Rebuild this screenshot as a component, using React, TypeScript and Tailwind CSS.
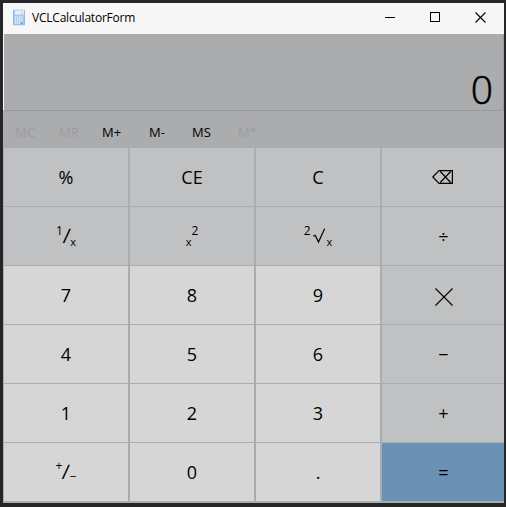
import type { ReactNode } from "react";

function CalculatorIcon() {
  return (
    <svg width="12" height="16" viewBox="0 0 12 16" className="-translate-y-[1.5px]">
      <rect width="12" height="16" rx="1" fill="#8fb8de" />
      <rect x="1" y="1" width="10" height="14" fill="#a3cbf0" />
      <rect x="2" y="1" width="9" height="4" fill="#e9f1f8" />
      <rect x="8" y="3" width="2" height="1" fill="#a9bed2" />
      {[7, 9, 11, 13].map((y) =>
        [2, 4, 6, 8].map((x) => (
          <rect
            key={`${x}-${y}`}
            x={x}
            y={y}
            width="1.3"
            height="1.2"
            fill={x === 8 && y === 13 ? "#3977b5" : "#edf6ff"}
          />
        )),
      )}
    </svg>
  );
}

function Backspace() {
  return (
    <svg width="22" height="14" viewBox="0 0 22 14" fill="none" stroke="#000" strokeWidth="1.2">
      <path d="M7 .6H20.4V13.4H7L.8 7Z M8.3 1.5L18.6 12.5M18.6 1.5L8.3 12.5" />
    </svg>
  );
}

function Times() {
  return (
    <svg width="18" height="18" viewBox="0 0 18 18" stroke="#000" strokeWidth="1.1" className="translate-y-[2px]">
      <path d="M.5 .5L17.5 17.5M17.5 .5L.5 17.5" />
    </svg>
  );
}

function Small({ children, className }: { children: ReactNode; className: string }) {
  return <span className={`leading-none font-medium ${className}`}>{children}</span>;
}

function Slash() {
  return <span className="-skew-x-[5deg] text-[20px] leading-none">/</span>;
}

const Reciprocal = (
  <span className="flex items-center">
    <Small className="-translate-y-[5px] text-[12px]">1</Small>
    <Slash />
    <Small className="translate-y-[5px] text-[11px]">x</Small>
  </span>
);
const Square = (
  <span className="flex items-center">
    <Small className="translate-y-[5px] text-[11px]">x</Small>
    <Small className="-translate-y-[5px] text-[12px]">2</Small>
  </span>
);
const Root = (
  <span className="flex items-center">
    <Small className="-translate-y-[5px] text-[12px]">2</Small>
    <svg width="16" height="16" viewBox="0 0 16 16" fill="none" stroke="#000">
      <path d="M2.3 8.3L4.2 7.3L7.5 14L13.6 .8" strokeWidth="1.2" />
    </svg>
    <Small className="translate-y-[5px] text-[11px]">x</Small>
  </span>
);
const Sign = (
  <span className="flex items-center">
    <Small className="-translate-y-[6px] text-[12px]">+</Small>
    <Slash />
    <Small className="translate-y-[5px] text-[12px]">−</Small>
  </span>
);

type Key = { label: ReactNode; tone: string };
const fn = "bg-[#c0c1c2]";
const op = "bg-[#c0c1c2] pl-px";
const num = "bg-[#d6d6d6]";

const keys: Key[] = [
  { label: "%", tone: fn },
  { label: "CE", tone: fn },
  { label: "C", tone: fn },
  { label: <Backspace />, tone: fn },
  { label: Reciprocal, tone: fn },
  { label: Square, tone: fn },
  { label: Root, tone: fn },
  { label: "÷", tone: op },
  { label: "7", tone: num },
  { label: "8", tone: num },
  { label: "9", tone: num },
  { label: <Times />, tone: op },
  { label: "4", tone: num },
  { label: "5", tone: num },
  { label: "6", tone: num },
  { label: "−", tone: op },
  { label: "1", tone: num },
  { label: "2", tone: num },
  { label: "3", tone: num },
  { label: "+", tone: op },
  { label: Sign, tone: num },
  { label: "0", tone: num },
  { label: ".", tone: num },
  { label: "=", tone: "bg-[#6b91b5] pl-px" },
];

const memory = [
  { label: "MC", width: "w-[44px]", on: false },
  { label: "MR", width: "w-[43px]", on: false },
  { label: "M+", width: "w-[47px]", on: true },
  { label: "M-", width: "w-[43px]", on: true },
  { label: "MS", width: "w-[46px]", on: true },
  { label: "M*", width: "w-[40px]", on: false },
];

export default function App() {
  return (
    <div className="h-[507px] w-[506px] bg-[#262527] pt-[3px] pl-[3px] font-['Open_Sans','Noto_Sans',sans-serif] text-black">
      <div className="flex h-[500px] w-[501px] flex-col bg-[#abacae]">
        <header className="flex h-[31px] shrink-0 items-center bg-[#f7f7f7] pl-[10px]">
          <CalculatorIcon />
          <h1 className="ml-[7px] -translate-y-[1px] text-[12px] tracking-[-0.22px]">VCLCalculatorForm</h1>
          <div className="mr-[18px] ml-auto flex items-center gap-[35px] pb-[3px]">
            <svg width="10" height="11" shapeRendering="crispEdges">
              <rect y="5" width="10" height="1" />
            </svg>
            <svg width="10" height="10" fill="none" stroke="#000">
              <rect x=".5" y=".5" width="9" height="9" />
            </svg>
            <svg width="11" height="11" stroke="#000" strokeWidth="1.1">
              <path d="M.5 .5L10.5 10.5M10.5 .5L.5 10.5" />
            </svg>
          </div>
        </header>
        <div className="flex h-[77px] shrink-0 items-end justify-end border-r border-b border-l border-r-[#98999b] border-b-[#98999b] border-l-white pr-[10px] pb-[6px]">
          <output className="text-[39px] leading-[30px] font-light [-webkit-text-stroke:0.6px_black]">0</output>
        </div>
        <div className="flex h-[37px] shrink-0 items-center pt-[7px] pl-[12px] text-[13px]">
          {memory.map((m) => (
            <button key={m.label} className={`text-left ${m.width} ${m.on ? "text-black" : "text-[#9b9c9e]"}`}>
              {m.label}
            </button>
          ))}
        </div>
        <main className="ml-px grid grid-cols-[124px_124px_124px_122px] grid-rows-[repeat(6,58px)] gap-x-[2px] gap-y-px">
          {keys.map((k, i) => (
            <button key={i} className={`flex items-center justify-center text-[18px] leading-none font-[380] ${k.tone}`}>
              {k.label}
            </button>
          ))}
        </main>
      </div>
    </div>
  );
}
